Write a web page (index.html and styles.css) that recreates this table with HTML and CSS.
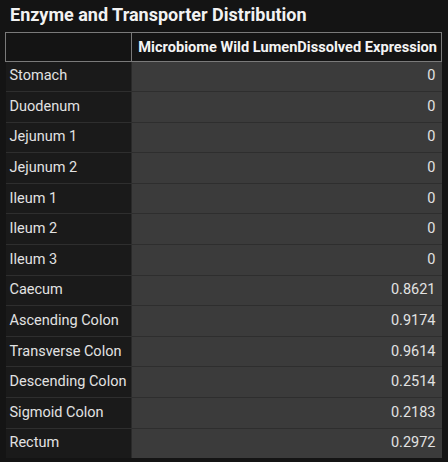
FILE: index.html
```html
<!DOCTYPE html>
<html>
<head>
<meta charset="utf-8">
<link rel="stylesheet" href="styles.css">
</head>
<body>
<div class="panel">
  <h1 class="title">Enzyme and Transporter Distribution</h1>
  <table class="grid">
    <thead>
      <tr><th class="corner"></th><th class="colhead">Microbiome Wild LumenDissolved Expression</th></tr>
    </thead>
    <tbody>
      <tr><td class="name">Stomach</td><td class="val">0</td></tr>
      <tr><td class="name">Duodenum</td><td class="val">0</td></tr>
      <tr><td class="name">Jejunum 1</td><td class="val">0</td></tr>
      <tr><td class="name">Jejunum 2</td><td class="val">0</td></tr>
      <tr><td class="name">Ileum 1</td><td class="val">0</td></tr>
      <tr><td class="name">Ileum 2</td><td class="val">0</td></tr>
      <tr><td class="name">Ileum 3</td><td class="val">0</td></tr>
      <tr><td class="name">Caecum</td><td class="val">0.8621</td></tr>
      <tr><td class="name">Ascending Colon</td><td class="val">0.9174</td></tr>
      <tr><td class="name">Transverse Colon</td><td class="val">0.9614</td></tr>
      <tr><td class="name">Descending Colon</td><td class="val">0.2514</td></tr>
      <tr><td class="name">Sigmoid Colon</td><td class="val">0.2183</td></tr>
      <tr><td class="name">Rectum</td><td class="val">0.2972</td></tr>
    </tbody>
  </table>
</div>
</body>
</html>
```
FILE: styles.css
```css
html, body {
  margin: 0;
  padding: 0;
  background: #141414;
}
.panel {
  width: 448px;
  height: 462px;
  padding: 3px 6px 0 5px;
  box-sizing: border-box;
  font-family: Roboto, "Liberation Sans", sans-serif;
  color: #e6e6e6;
}
.title {
  margin: 0 0 5px 5px;
  font-size: 18px;
  font-weight: 700;
  line-height: 24px;
  color: #f2f2f2;
}
.grid {
  width: 437px;
  border-collapse: collapse;
  font-size: 14.5px;
}
.grid th {
  height: 27.5px;
  padding: 0 4px;
  border: 1px solid #7a7a7a;
  background: #141414;
  color: #f4f4f4;
  font-size: 14.6px;
  font-weight: 700;
  white-space: nowrap;
}
.grid th.corner {
  width: 117px;
}
.grid th.colhead {
  text-align: right;
}
.grid td {
  height: 29.6px;
  padding: 0 5px 0 4px;
  border-bottom: 1px solid #2e2e2e;
  line-height: 16px;
  white-space: nowrap;
}
.grid tbody tr:last-child td {
  border-bottom: none;
}
.grid td.name {
  background: #1a1a1a;
  border-right: 1px solid #2a2a2a;
  color: #e2e2e2;
}
.grid td.val {
  background: #3b3b3b;
  text-align: right;
  padding-right: 6px;
  color: #e2e2e2;
}
```
